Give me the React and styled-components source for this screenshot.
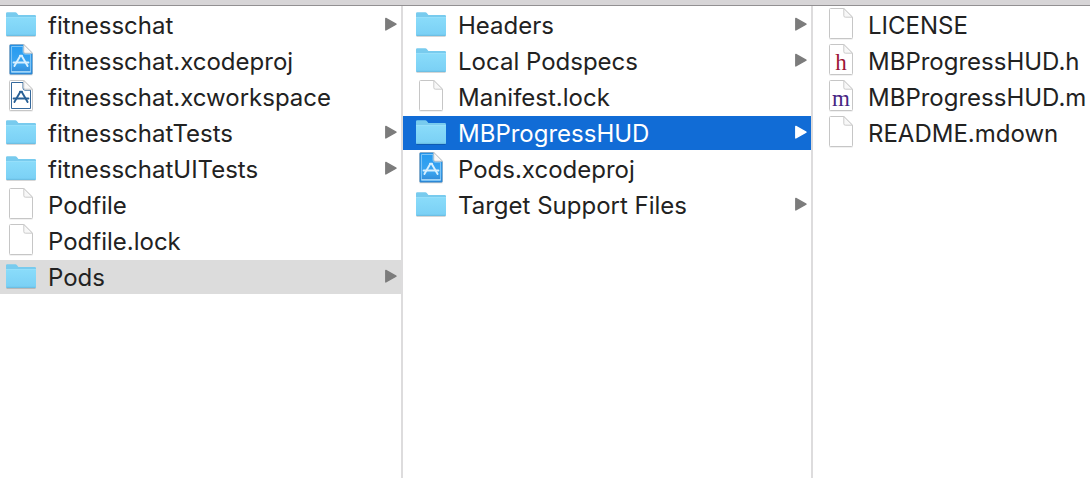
import styled, { createGlobalStyle } from 'styled-components'

const GlobalStyle = createGlobalStyle`
    body {
        margin: 0;
        background: #ffffff;
    }
`

const Browser = styled.main`
    min-height: 100vh;
    display: flex;
    flex-direction: column;
    overflow: hidden;
    font-family: Inter, "Liberation Sans", sans-serif;
    font-size: 24px;
    line-height: 32px;
    color: #222222;
`

const TopBar = styled.header`
    height: 5px;
    background: #d7d5d7;
    border-bottom: 1px solid #929092;
`

const Columns = styled.div`
    flex: 1;
    display: grid;
    grid-template-columns: minmax(0, 403fr) minmax(0, 410fr) minmax(0, 277fr);
`

const Column = styled.ul`
    margin: 0;
    padding: 2px 0 0;
    display: flex;
    flex-direction: column;
    gap: 2px;
    list-style: none;
    border-right: ${({ $last }) => $last ? 'none' : '2px solid #dddcdd'};
`

const Row = styled.button`
    width: 100%;
    height: 34px;
    padding: 0 4px 0 ${({ $inset }) => $inset}px;
    display: flex;
    align-items: center;
    gap: 12px;
    border: 0;
    font: inherit;
    text-align: left;
    color: ${({ $state }) => $state === 'active' ? '#ffffff' : 'inherit'};
    background: ${({ $state }) => $state === 'active' ? '#116cd6' : $state === 'open' ? '#dcdcdc' : 'transparent'};
`

const FileName = styled.span`
    flex: 1;
    padding-top: 2px;
    white-space: nowrap;
`

const Icon = styled.svg`
    flex: none;
    display: block;
`

const Letter = styled.text`
    font-family: "Liberation Serif", serif;
    font-size: 23px;
    text-anchor: middle;
`

const FolderIcon = () => (
    <Icon width="30" height="34" viewBox="0 0 30 34" aria-hidden="true">
        <defs>
            <linearGradient id="folderFront" x1="0" y1="0" x2="0" y2="1">
                <stop offset="0" stopColor="#8adcfa" />
                <stop offset="1" stopColor="#7ad0f5" />
            </linearGradient>
        </defs>
        <path d="M.5 28.4H29.5" stroke="#000000" strokeOpacity=".18" />
        <path d="M0 5.6Q0 4.3 1.3 4.3H9.3Q10.2 4.3 10.8 5L12.4 7H28.8Q30 7 30 8.2V26.8Q30 28 28.8 28H1.2Q0 28 0 26.8Z" fill="#78cbee" />
        <path d="M0 9H30V26.2Q30 27.4 28.8 27.4H1.2Q0 27.4 0 26.2Z" fill="url(#folderFront)" />
        <path d="M0 9.5H30" stroke="#96dffa" />
        <path d="M.5 27.3H29.5" stroke="#6bbce0" />
    </Icon>
)

const Page = ({ children }) => (
    <Icon width="30" height="34" viewBox="0 0 30 34" aria-hidden="true">
        <path d="M3.5 30.9H26.5" stroke="#000000" strokeOpacity=".15" />
        <path d="M4.5 .5H17.8L26.5 9.2V29.5Q26.5 30.5 25.5 30.5H4.5Q3.5 30.5 3.5 29.5V1.5Q3.5 .5 4.5 .5Z" fill="#ffffff" stroke="#c6c6c6" />
        {children}
        <path d="M17.8 .5V7.7Q17.8 9.2 19.3 9.2H26.5Z" fill="#f8f8f8" stroke="#c6c6c6" strokeWidth=".9" />
    </Icon>
)

const ProjectIcon = ({ filled }) => (
    <Page>
        {filled && (
            <>
                <defs>
                    <linearGradient id="projectFill" x1="0" y1="0" x2="0" y2="1">
                        <stop offset="0" stopColor="#249af0" />
                        <stop offset=".65" stopColor="#3ca5f0" />
                        <stop offset="1" stopColor="#2f86d4" />
                    </linearGradient>
                </defs>
                <path d="M4 1H18L26 9V30H4Z" fill="url(#projectFill)" stroke="#2788d8" strokeWidth=".8" />
            </>
        )}
        <path
            d="M5.5 2.5H17V8Q17 10.2 19 10.2H24.5V28.5H5.5Z"
            fill="none"
            stroke={filled ? '#7cc4f6' : '#34689c'}
        />
        <g fill="none" stroke={filled ? '#d8f0ff' : '#286096'} strokeLinecap="round">
            <path d="M14.2 12L8.4 22M15.8 12L21.6 22" strokeWidth="1.9" />
            <path d="M13.8 11.4H16.2" strokeWidth="1.4" />
            <path d="M7.6 18.6H22.4" strokeWidth="2" />
        </g>
        {filled && <path d="M5.5 27.5H24.5" stroke="#bde3fb" strokeWidth=".8" />}
    </Page>
)

const FileIcon = ({ kind }) => {
    switch (kind) {
        case 'folder':
            return <FolderIcon />
        case 'project':
            return <ProjectIcon filled />
        case 'workspace':
            return <ProjectIcon />
        case 'header':
            return <Page><Letter x="15" y="26" fill="#9c1537">h</Letter></Page>
        case 'source':
            return <Page><Letter x="15" y="26" fill="#472583">m</Letter></Page>
        default:
            return <Page />
    }
}

const Arrow = ({ active }) => (
    <Icon width="12" height="34" viewBox="0 0 12 34" aria-hidden="true">
        <path
            d="M.8 10.4L11 16.2L.8 22Z"
            fill={active ? '#ffffff' : '#7c7c7c'}
            stroke={active ? '#ffffff' : '#7c7c7c'}
            strokeWidth="1.4"
            strokeLinejoin="round"
        />
    </Icon>
)

const columns = [
    {
        inset: 6,
        files: [
            { name: 'fitnesschat', kind: 'folder' },
            { name: 'fitnesschat.xcodeproj', kind: 'project' },
            { name: 'fitnesschat.xcworkspace', kind: 'workspace' },
            { name: 'fitnesschatTests', kind: 'folder' },
            { name: 'fitnesschatUITests', kind: 'folder' },
            { name: 'Podfile', kind: 'file' },
            { name: 'Podfile.lock', kind: 'file' },
            { name: 'Pods', kind: 'folder', state: 'open' },
        ],
    },
    {
        inset: 13,
        files: [
            { name: 'Headers', kind: 'folder' },
            { name: 'Local Podspecs', kind: 'folder' },
            { name: 'Manifest.lock', kind: 'file' },
            { name: 'MBProgressHUD', kind: 'folder', state: 'active' },
            { name: 'Pods.xcodeproj', kind: 'project' },
            { name: 'Target Support Files', kind: 'folder' },
        ],
    },
    {
        inset: 13,
        files: [
            { name: 'LICENSE', kind: 'file' },
            { name: 'MBProgressHUD.h', kind: 'header' },
            { name: 'MBProgressHUD.m', kind: 'source' },
            { name: 'README.mdown', kind: 'file' },
        ],
    },
]

const App = () => {
    return (
        <Browser>
            <GlobalStyle />
            <TopBar />
            <Columns>
                {columns.map(({ inset, files }, index) => (
                    <Column key={index} $last={index === columns.length - 1}>
                        {files.map(({ name, kind, state }) => (
                            <li key={name}>
                                <Row type="button" $inset={inset} $state={state}>
                                    <FileIcon kind={kind} />
                                    <FileName>{name}</FileName>
                                    {kind === 'folder' && <Arrow active={state === 'active'} />}
                                </Row>
                            </li>
                        ))}
                    </Column>
                ))}
            </Columns>
        </Browser>
    )
}

export default App
